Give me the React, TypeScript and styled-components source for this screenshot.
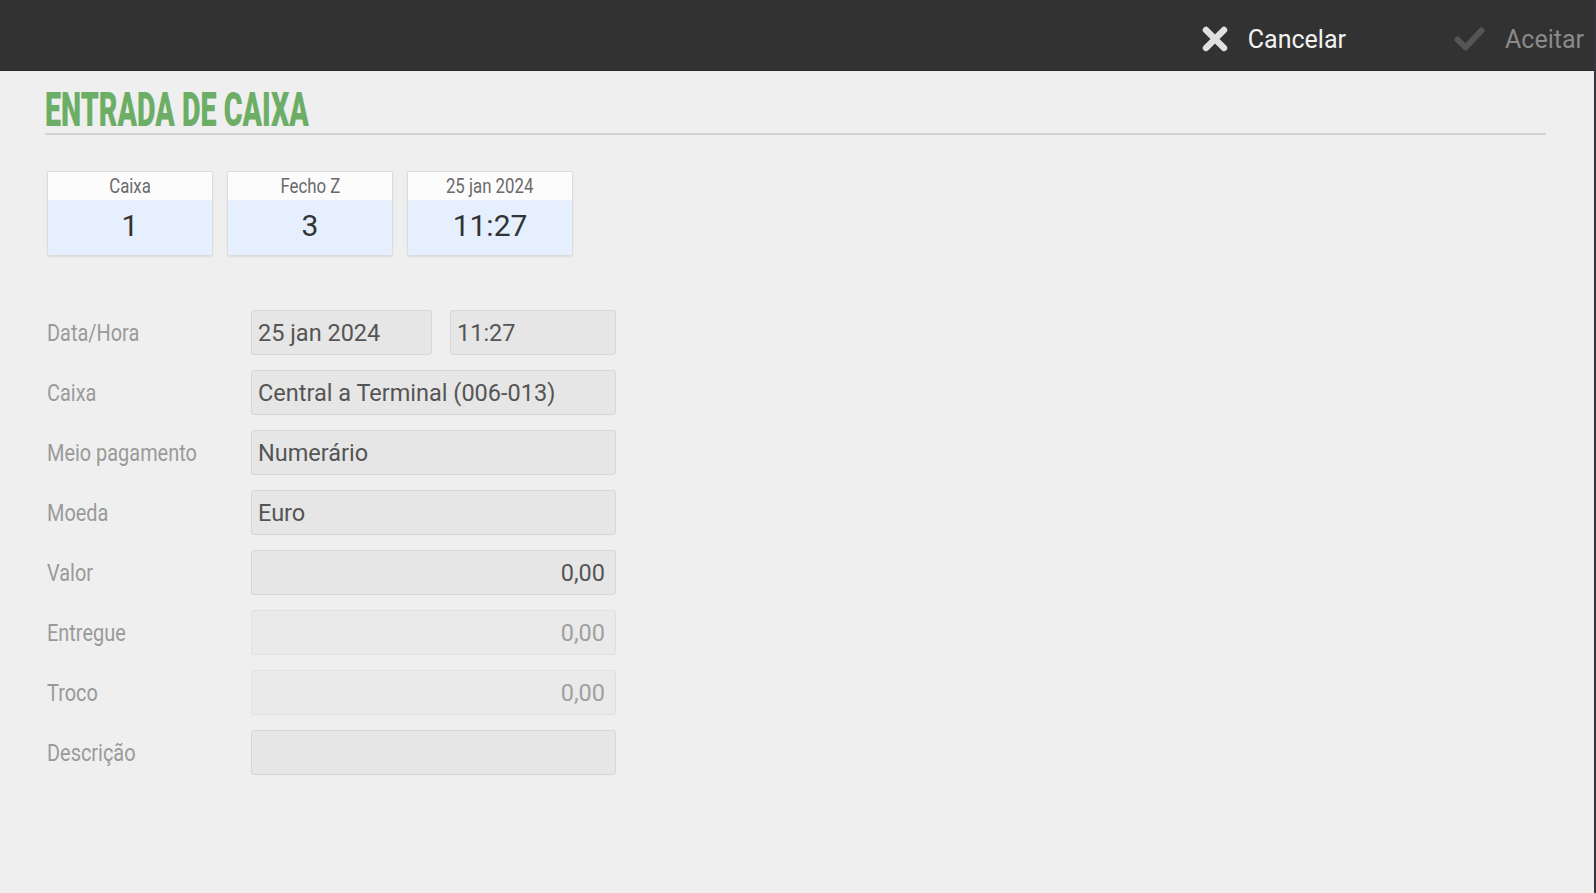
import React from 'react'
import styled, { createGlobalStyle } from 'styled-components'

const GlobalStyle = createGlobalStyle`
  html, body {
    margin: 0;
    padding: 0;
    background: #efefef;
    overflow: hidden;
  }
  * { box-sizing: border-box; }
`

const Screen = styled.div`
  width: 100vw;
  height: 100vh;
  display: flex;
  flex-direction: column;
  border-right: 2px solid #37363f;
  font-family: Roboto, "Liberation Sans", sans-serif;
`

const TopBar = styled.div`
  height: 71px;
  flex-shrink: 0;
  background: #323232;
  border-bottom: 1px solid #2a2a2a;
  display: flex;
  justify-content: flex-end;
  align-items: center;
  padding: 8px 10px 0 0;
  gap: 108px;
`

const Action = styled.button<{ $muted?: boolean }>`
  display: flex;
  align-items: center;
  gap: 20px;
  border: none;
  background: transparent;
  padding: 0;
  font-family: Roboto, "Liberation Sans", sans-serif;
  font-size: 25px;
  color: ${p => (p.$muted ? '#8a8a8a' : '#f2f2f2')};
  cursor: ${p => (p.$muted ? 'default' : 'pointer')};
  svg { display: block; }
`

const Content = styled.div`
  flex: 1;
  padding: 0 48px 0 45px;
`

const TitleBar = styled.div`
  border-bottom: 2px solid #d2d2d2;
  height: 64px;
  padding-top: 14px;
`

const Title = styled.h1`
  margin: 0;
  font-family: Roboto, "Liberation Sans", sans-serif;
  font-weight: 900;
  font-size: 49px;
  line-height: 50px;
  color: #6cae66;
  white-space: nowrap;
  transform: scaleX(0.585);
  transform-origin: left center;
`

const Cards = styled.div`
  display: flex;
  gap: 14px;
  margin: 36px 0 0 2px;
`

const Card = styled.div`
  width: 166px;
  border: 1px solid #dcdcdc;
  border-radius: 2px;
  box-shadow: 0 1px 2px rgba(0, 0, 0, 0.08);
  overflow: hidden;
`

const CardHead = styled.div`
  height: 29px;
  background: #fcfcfc;
  border-bottom: 1px solid #eaeef4;
  display: flex;
  align-items: center;
  justify-content: center;
  color: #6a6a6a;
  font-size: 21px;
  span {
    display: inline-block;
    transform: scaleX(0.8);
  }
`

const CardValue = styled.div`
  height: 54px;
  background: #e5effd;
  display: flex;
  align-items: center;
  justify-content: center;
  padding-bottom: 5px;
  color: #333;
  font-size: 30px;
`

const Form = styled.div`
  display: flex;
  flex-direction: column;
  gap: 15px;
  margin: 54px 0 0 2px;
`

const Row = styled.div`
  display: flex;
  align-items: center;
`

const Label = styled.div`
  width: 204px;
  flex-shrink: 0;
  color: #9a9a9a;
  font-size: 24px;
  white-space: nowrap;
  span {
    display: inline-block;
    transform: scaleX(0.83);
    transform-origin: left center;
  }
`

const Fields = styled.div`
  display: flex;
  gap: 18px;
  width: 365px;
`

const Field = styled.div<{ $w?: number; $right?: boolean; $dim?: boolean }>`
  width: ${p => (p.$w ? `${p.$w}px` : '100%')};
  height: 45px;
  border: 1px solid ${p => (p.$dim ? '#e0e0e0' : '#d6d6d6')};
  border-radius: 3px;
  background: ${p => (p.$dim ? '#eaeaea' : '#e6e6e6')};
  display: flex;
  align-items: center;
  justify-content: ${p => (p.$right ? 'flex-end' : 'flex-start')};
  padding: 0 10px 0 6px;
  font-size: 23.5px;
  color: ${p => (p.$dim ? '#a0a0a0' : '#555')};
`

const CloseIcon = () => (
  <svg width="26" height="26" viewBox="0 0 26 26">
    <path d="M4 4 L22 22 M22 4 L4 22" stroke="#e0e0e0" strokeWidth="6.5" strokeLinecap="round" />
  </svg>
)

const CheckIcon = () => (
  <svg width="31" height="26" viewBox="0 0 31 26">
    <path d="M3.5 13.5 L11.5 21.5 L27.5 4.5" stroke="#555" strokeWidth="6" strokeLinecap="round" strokeLinejoin="round" fill="none" />
  </svg>
)

type FormRow = { label: string; value?: string; right?: boolean; dim?: boolean }

const rows: FormRow[] = [
  { label: 'Caixa', value: 'Central a Terminal (006-013)' },
  { label: 'Meio pagamento', value: 'Numerário' },
  { label: 'Moeda', value: 'Euro' },
  { label: 'Valor', value: '0,00', right: true },
  { label: 'Entregue', value: '0,00', right: true, dim: true },
  { label: 'Troco', value: '0,00', right: true, dim: true },
  { label: 'Descrição', value: '' },
]

const summary = [
  { head: 'Caixa', value: '1' },
  { head: 'Fecho Z', value: '3' },
  { head: '25 jan 2024', value: '11:27' },
]

export default function App() {
  return (
    <>
      <GlobalStyle />
      <Screen>
        <TopBar>
          <Action>
            <CloseIcon />
            Cancelar
          </Action>
          <Action $muted>
            <CheckIcon />
            Aceitar
          </Action>
        </TopBar>
        <Content>
          <TitleBar>
            <Title>ENTRADA DE CAIXA</Title>
          </TitleBar>

          <Cards>
            {summary.map(c => (
              <Card key={c.head}>
                <CardHead><span>{c.head}</span></CardHead>
                <CardValue>{c.value}</CardValue>
              </Card>
            ))}
          </Cards>

          <Form>
            <Row>
              <Label><span>Data/Hora</span></Label>
              <Fields>
                <Field $w={181}>25 jan 2024</Field>
                <Field $w={166}>11:27</Field>
              </Fields>
            </Row>
            {rows.map(r => (
              <Row key={r.label}>
                <Label><span>{r.label}</span></Label>
                <Fields>
                  <Field $right={r.right} $dim={r.dim}>{r.value}</Field>
                </Fields>
              </Row>
            ))}
          </Form>
        </Content>
      </Screen>
    </>
  )
}
